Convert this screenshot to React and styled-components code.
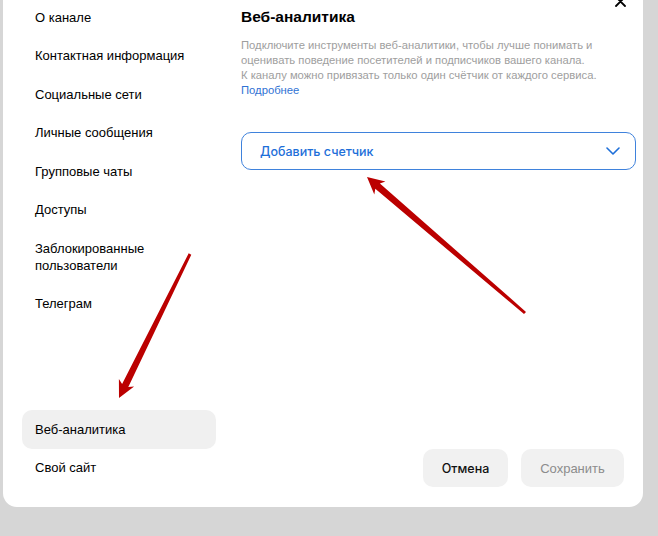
import React from "react";
import styled, { createGlobalStyle } from "styled-components";

const Global = createGlobalStyle`
  html, body { margin: 0; padding: 0; }
  body { font-family: "Liberation Sans", Arial, sans-serif; background: #d6d6d6; }
  * { box-sizing: border-box; }
`;

const Backdrop = styled.div`
  position: relative;
  height: 536px;
  overflow: hidden;
  background: #d6d6d6;
  padding: 0 15px 0 3px;
`;

const Modal = styled.div`
  position: relative;
  margin-top: -22px;
  height: 529px;
  background: #fff;
  border-radius: 0 0 14px 14px;
  display: flex;
  padding: 20px 7px 20px 19px;
`;

const Sidebar = styled.nav`
  width: 194px;
  flex-shrink: 0;
  display: flex;
  flex-direction: column;
`;

const NavItem = styled.div`
  padding: 10.75px 13px;
  line-height: 17px;
  font-size: 13px;
  color: #000;
  border-radius: 10px;
  background: ${(p) => (p.$active ? "#f0f0f0" : "transparent")};
  margin-top: ${(p) => (p.$pushed ? "auto" : "0")};
`;

const Main = styled.section`
  flex: 1;
  margin-left: 25px;
  display: flex;
  flex-direction: column;
`;

const Title = styled.h2`
  margin: 0;
  padding-top: 8px;
  font-size: 15.5px;
  line-height: 22px;
  font-weight: 700;
  color: #000;
`;

const Desc = styled.p`
  margin: 10px 0 0;
  font-size: 11.25px;
  line-height: 15px;
  color: #9e9e9e;
  white-space: nowrap;
`;

const MoreLink = styled.a`
  display: block;
  color: #2f72d4;
  text-decoration: none;
`;

const Select = styled.button`
  margin-top: 34px;
  height: 38px;
  width: 100%;
  border: 1px solid #3f82dc;
  border-radius: 10px;
  background: #fff;
  display: flex;
  align-items: center;
  justify-content: space-between;
  padding: 0 15px 0 18px;
  color: #1e6fd9;
  font-family: Inter, Roboto, "Liberation Sans", sans-serif;
  font-weight: 500;
  font-size: 12.5px;
  cursor: pointer;
`;

const Footer = styled.div`
  margin-top: auto;
  display: flex;
  justify-content: flex-end;
  gap: 13px;
  padding-right: 12px;
`;

const Button = styled.button`
  height: 38px;
  width: ${(p) => p.$w}px;
  padding: 0;
  border: 0;
  border-radius: 10px;
  background: #f1f1f1;
  color: ${(p) => (p.$muted ? "#8c8c8c" : "#111")};
  font-family: ${(p) => (p.$muted ? '"Liberation Sans", Arial, sans-serif' : 'Inter, Roboto, "Liberation Sans", sans-serif')};
  font-weight: ${(p) => (p.$muted ? 400 : 500)};
  font-size: ${(p) => (p.$muted ? "13px" : "12.5px")};
  cursor: pointer;
`;

const Close = styled.button`
  position: absolute;
  top: 18px;
  right: 17px;
  width: 11px;
  height: 11px;
  padding: 0;
  border: 0;
  background: none;
  display: flex;
`;

const Overlay = styled.svg`
  position: absolute;
  inset: 0;
  pointer-events: none;
`;

function arrowPoints(x1, y1, x2, y2, tw, nw, hl, hw, barb) {
  const dx = x2 - x1;
  const dy = y2 - y1;
  const L = Math.hypot(dx, dy);
  const ux = dx / L, uy = dy / L;
  const px = -uy, py = ux;
  const wx = x2 - ux * hl, wy = y2 - uy * hl;
  const nx = x2 - ux * (hl - barb), ny = y2 - uy * (hl - barb);
  const pts = [
    [x1 + (px * tw) / 2, y1 + (py * tw) / 2],
    [nx + (px * nw) / 2, ny + (py * nw) / 2],
    [wx + (px * hw) / 2, wy + (py * hw) / 2],
    [x2, y2],
    [wx - (px * hw) / 2, wy - (py * hw) / 2],
    [nx - (px * nw) / 2, ny - (py * nw) / 2],
    [x1 - (px * tw) / 2, y1 - (py * tw) / 2],
  ];
  return pts.map((p) => p.map((v) => v.toFixed(1)).join(",")).join(" ");
}

const navTop = [
  "О канале",
  "Контактная информация",
  "Социальные сети",
  "Личные сообщения",
  "Групповые чаты",
  "Доступы",
  "Заблокированные пользователи",
  "Телеграм",
];

export default function App() {
  return (
    <>
      <Global />
      <Backdrop>
        <Modal>
          <Sidebar>
            {navTop.map((t) => (
              <NavItem key={t}>
                {t === "Заблокированные пользователи" ? (
                  <>
                    Заблокированные
                    <br />
                    пользователи
                  </>
                ) : (
                  t
                )}
              </NavItem>
            ))}
            <NavItem $active $pushed>
              Веб-аналитика
            </NavItem>
            <NavItem>Свой сайт</NavItem>
          </Sidebar>
          <Main>
            <Title>Веб-аналитика</Title>
            <Desc>
              Подключите инструменты веб-аналитики, чтобы лучше понимать и
              <br />
              оценивать поведение посетителей и подписчиков вашего канала.
              <br />
              К каналу можно привязать только один счётчик от каждого сервиса.
              <MoreLink href="#">Подробнее</MoreLink>
            </Desc>
            <Select>
              <span>Добавить счетчик</span>
              <svg width="14" height="8" viewBox="0 0 14 8">
                <path d="M1 1l6 6 6-6" fill="none" stroke="#1e6fd9" strokeWidth="1.6" strokeLinecap="round" strokeLinejoin="round" />
              </svg>
            </Select>
            <Footer>
              <Button $w={85}>Отмена</Button>
              <Button $w={103} $muted>Сохранить</Button>
            </Footer>
          </Main>
          <Close aria-label="Закрыть">
            <svg width="11" height="11" viewBox="0 0 11 11">
              <path d="M1 1l9 9M10 1l-9 9" stroke="#000" strokeWidth="1.8" strokeLinecap="round" />
            </svg>
          </Close>
        </Modal>
        <Overlay width="658" height="536" viewBox="0 0 658 536">
          <polygon points={arrowPoints(190, 254, 119, 398, 3, 7, 17, 17, 3)} fill="#bb0000" />
          <polygon points={arrowPoints(525, 313, 367, 177, 3, 7, 17, 17, 3)} fill="#bb0000" />
        </Overlay>
      </Backdrop>
    </>
  );
}
